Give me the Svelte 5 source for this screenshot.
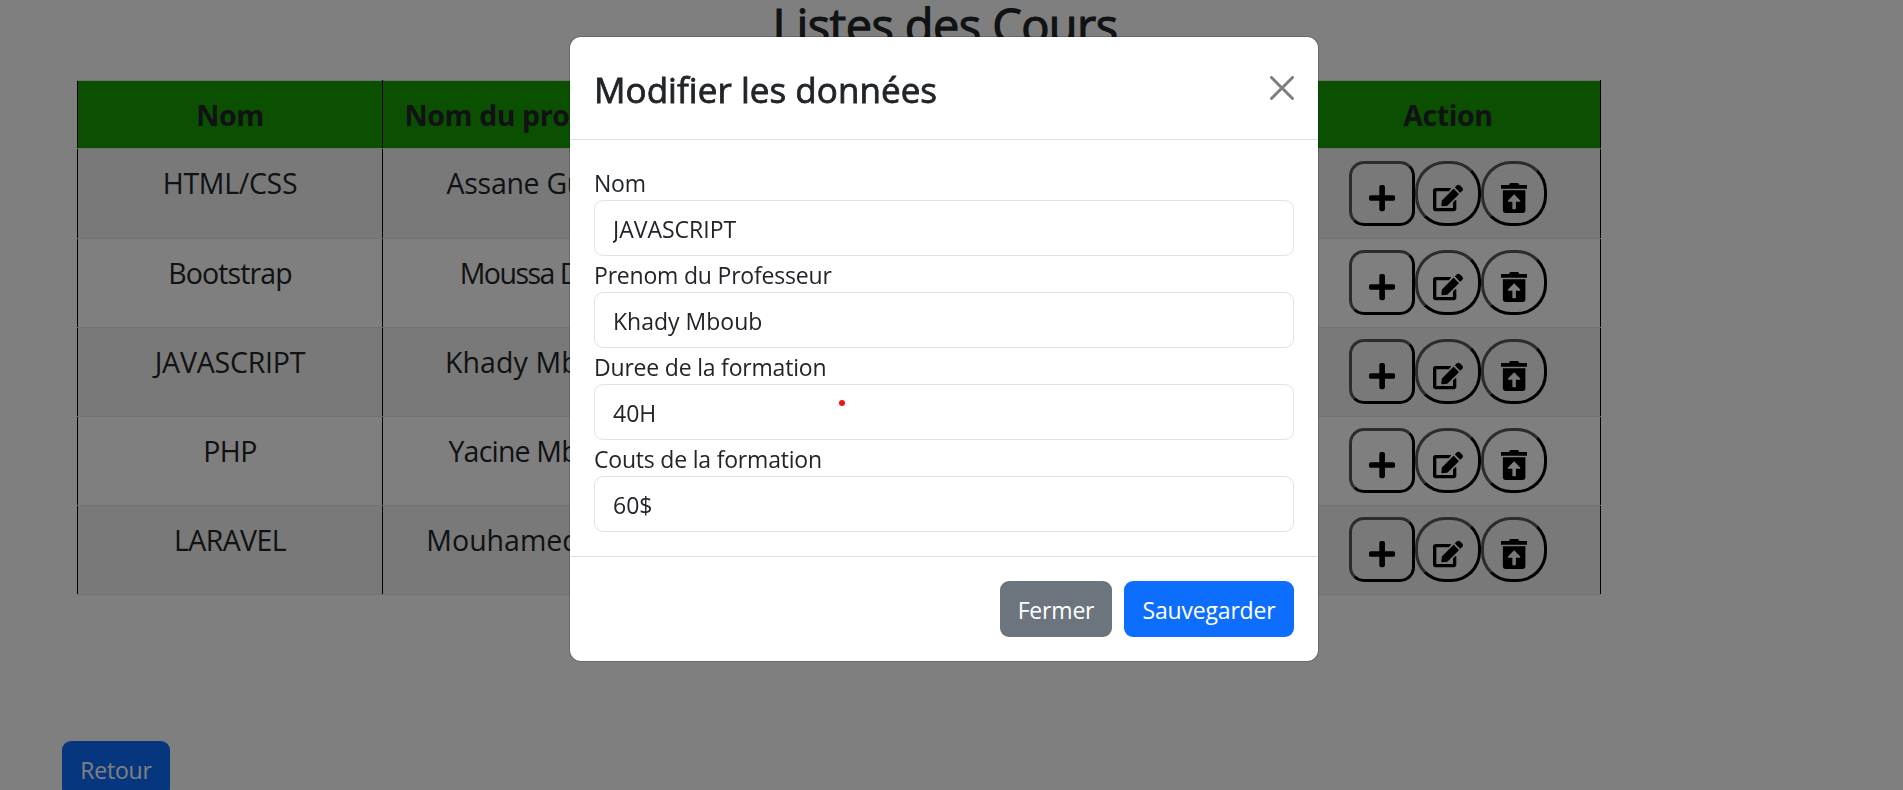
<script>
  const rows = [
    { course: 'HTML/CSS', spacing: -0.3, teacher: 'Assane Gueye', teacherSpacing: -0.3 },
    { course: 'Bootstrap', spacing: -0.9, teacher: 'Moussa Diop', teacherSpacing: -1.5 },
    { course: 'JAVASCRIPT', spacing: -0.2, teacher: 'Khady Mboub', teacherSpacing: 0.1 },
    { course: 'PHP', spacing: -0.6, teacher: 'Yacine Mboup', teacherSpacing: -0.8 },
    { course: 'LARAVEL', spacing: -0.6, teacher: 'Mouhamed Diop', teacherSpacing: 0 }
  ];
  const fields = [
    { id: 'nom', label: 'Nom', value: 'JAVASCRIPT' },
    { id: 'prof', label: 'Prenom du Professeur', value: 'Khady Mboub' },
    { id: 'duree', label: 'Duree de la formation', value: '40H' },
    { id: 'cout', label: 'Couts de la formation', value: '60$' }
  ];
</script>

<main>
  <h2>Listes des Cours</h2>
  <table>
    <colgroup>
      <col class="c1" /><col class="c2" /><col class="c3" /><col class="c4" />
    </colgroup>
    <thead>
      <tr><th>Nom</th><th>Nom du professeur</th><th></th><th>Action</th></tr>
    </thead>
    <tbody>
      {#each rows as row}
        <tr>
          <td style="letter-spacing: {row.spacing}px">{row.course}</td>
          <td style="letter-spacing: {row.teacherSpacing}px">{row.teacher}</td>
          <td></td>
          <td>
            <div class="actions">
              <button class="act square" aria-label="Ajouter">
                <svg width="26.25" height="30" viewBox="0 0 448 512"><path d="M416 208H272V64c0-17.67-14.33-32-32-32h-32c-17.67 0-32 14.33-32 32v144H32c-17.67 0-32 14.33-32 32v32c0 17.67 14.33 32 32 32h144v144c0 17.67 14.33 32 32 32h32c17.67 0 32-14.33 32-32V304h144c17.67 0 32-14.33 32-32v-32c0-17.67-14.33-32-32-32z" /></svg>
              </button>
              <button class="act" aria-label="Modifier">
                <svg width="30" height="30" viewBox="0 0 576 512"><path d="M402.6 83.2l90.2 90.2c3.8 3.8 3.8 10 0 13.8L274.4 405.6l-92.8 10.3c-12.4 1.4-22.9-9.1-21.5-21.5l10.3-92.8L388.8 83.2c3.8-3.8 10-3.8 13.8 0zm162-22.9l-48.8-48.8c-15.2-15.2-39.9-15.2-55.2 0l-35.4 35.4c-3.8 3.8-3.8 10 0 13.8l90.2 90.2c3.8 3.8 10 3.8 13.8 0l35.4-35.4c15.2-15.3 15.2-40 0-55.2zM384 346.2V448H64V128h229.8c3.2 0 6.2-1.3 8.5-3.5l40-40c7.6-7.6 2.2-20.5-8.5-20.5H48C21.5 64 0 85.5 0 112v352c0 26.5 21.5 48 48 48h352c26.5 0 48-21.5 48-48V306.2c0-10.7-12.9-16-20.5-8.5l-40 40c-2.2 2.3-3.5 5.3-3.5 8.5z" /></svg>
              </button>
              <button class="act" aria-label="Supprimer">
                <svg width="26.25" height="30" viewBox="0 0 448 512"><path fill-rule="evenodd" d="M432 34H312l-9.4-20.7A24 24 0 0 0 281.1 0H166.8a23.72 23.72 0 0 0-21.4 13.3L136 34H6A6 6 0 0 0 0 40v52a6 6 0 0 0 6 6h436a6 6 0 0 0 6-6V40a6 6 0 0 0-6-6zM32 122H416V470A42 42 0 0 1 374 512H74A42 42 0 0 1 32 470zM224 192L120 298Q112 318 130 318H194V436Q194 446 204 446H244Q254 446 254 436V318H318Q336 318 328 298z" /></svg>
              </button>
            </div>
          </td>
        </tr>
      {/each}
    </tbody>
  </table>
  <button class="btn primary back">Retour</button>
</main>

<div class="backdrop"></div>

<div class="modal" role="dialog" aria-modal="true" aria-labelledby="dlg">
  <header>
    <h1 id="dlg">Modifier les données</h1>
    <button class="close" aria-label="Fermer la fenêtre">
      <svg width="24" height="24" viewBox="0 0 16 16"><path d="M.293.293a1 1 0 0 1 1.414 0L8 6.586 14.293.293a1 1 0 1 1 1.414 1.414L9.414 8l6.293 6.293a1 1 0 0 1-1.414 1.414L8 9.414l-6.293 6.293a1 1 0 0 1-1.414-1.414L6.586 8 .293 1.707a1 1 0 0 1 0-1.414z" /></svg>
    </button>
  </header>
  <div class="body">
    {#each fields as f}
      <label for={f.id}>{f.label}</label>
      <input id={f.id} type="text" value={f.value} />
    {/each}
    <i class="dot"></i>
  </div>
  <footer>
    <button class="btn secondary">Fermer</button>
    <button class="btn primary">Sauvegarder</button>
  </footer>
</div>

<style>
  :global(body) {
    margin: 0;
    height: 790px;
    overflow: hidden;
    background: #fff;
    color: #212529;
    font-family: 'Open Sans', 'Noto Sans', sans-serif;
    font-size: 23px;
  }
  * { box-sizing: border-box; }
  main { width: 1903px; height: 790px; overflow: hidden; }
  h2 {
    margin: 0;
    width: 1890px;
    height: 80px;
    line-height: 50px;
    font-size: 47px;
    font-weight: 400;
    letter-spacing: -0.6px;
    -webkit-text-stroke: 1.1px currentColor;
    text-align: center;
  }
  table {
    table-layout: fixed;
    width: 1524px;
    margin-left: 77px;
    border-collapse: collapse;
    font-size: 28.5px;
    line-height: 45px;
    text-align: center;
  }
  .c1 { width: 305px; }
  .c2 { width: 311px; }
  .c4 { width: 305px; }
  th, td { padding: 0; border: 1px solid #dee2e6; border-left-color: #000; border-right-color: #000; }
  th {
    height: 68px;
    padding-top: 1px;
    background: #15a000;
    font-weight: 700;
    letter-spacing: -0.4px;
  }
  td { height: 89px; padding-top: 12px; vertical-align: top; }
  tbody tr:first-child td { height: 90px; }
  tbody tr:nth-child(odd) { background: #f2f2f2; }
  .actions { display: flex; justify-content: center; }
  tr:not(:first-child) .actions { margin-top: -1px; }
  .act {
    width: 66px;
    height: 65px;
    padding: 8px 0 0;
    border: 3px outset #000;
    border-color: #585858 #000 #000 #585858;
    border-radius: 30px;
    background: none;
    display: flex;
    align-items: center;
    justify-content: center;
  }
  .square { border-radius: 15px; }
  .btn {
    height: 56px;
    padding: 2px 0 0;
    border: 0;
    border-radius: 9px;
    color: #fff;
    font: inherit;
    line-height: 54px;
    letter-spacing: -0.2px;
  }
  .primary { background: #0d6efd; }
  .secondary { background: #6c757d; }
  .back { display: block; width: 108px; margin: 146px 0 0 62px; }
  .backdrop { position: fixed; inset: 0; background: rgba(0, 0, 0, 0.5); }
  .modal {
    position: fixed;
    left: 569px;
    top: 36px;
    width: 750px;
    height: 626px;
    border: 1px solid rgba(0, 0, 0, 0.175);
    border-radius: 12px;
    background: #fff;
    background-clip: padding-box;
  }
  header {
    display: flex;
    align-items: center;
    justify-content: space-between;
    height: 103px;
    padding: 0 24px;
    border-bottom: 1px solid #dee2e6;
  }
  h1 {
    margin: 4px 0 0;
    font-size: 35px;
    font-weight: 400;
    line-height: 54px;
    letter-spacing: 0.05px;
    -webkit-text-stroke: 0.8px currentColor;
  }
  .close { width: 24px; height: 24px; padding: 0; border: 0; background: none; opacity: 0.5; display: flex; }
  .body { padding: 24px 24px 0; height: 416px; }
  label { display: block; height: 36px; line-height: 38px; letter-spacing: -0.2px; }
  input {
    display: block;
    width: 100%;
    height: 56px;
    padding: 2px 18px 0;
    border: 1px solid #dee2e6;
    border-radius: 9px;
    background: #fff;
    color: #212529;
    font: inherit;
  }
  .dot { position: absolute; left: 269px; top: 363px; width: 6px; height: 6px; border-radius: 50%; background: #e81717; }
  footer {
    display: flex;
    justify-content: flex-end;
    gap: 12px;
    padding: 24px 24px 0;
    border-top: 1px solid #dee2e6;
  }
  footer .secondary { width: 112px; }
  footer .primary { width: 170px; }
</style>
